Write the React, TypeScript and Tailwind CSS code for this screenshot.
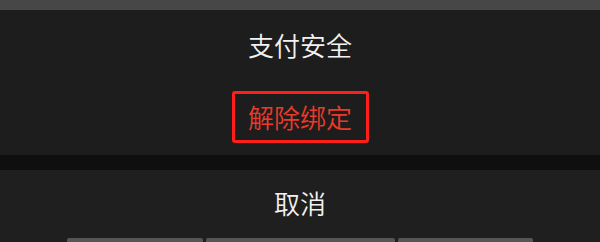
import React from "react";

export default function App() {
  const font = { fontFamily: '"Noto Sans CJK SC", "Noto Sans", sans-serif' };
  return (
    <div className="w-[600px] h-[242px] overflow-hidden flex flex-col bg-[#1d1d1d]" style={font}>
      <div className="h-[10px] shrink-0 bg-[#474747]" />
      <div className="h-[145px] shrink-0 bg-[#1d1d1d] flex flex-col items-center">
        <div className="mt-[22px] text-[26px] leading-[26px] font-[350] text-[#f2f2f2]">支付安全</div>
        <div className="mt-[33px] w-[137px] h-[52px] border-[3px] border-[#ff1f1a] rounded-[3px] flex items-center justify-center">
          <span className="text-[26px] leading-[26px] font-[350] text-[#ec3a2a]">解除绑定</span>
        </div>
      </div>
      <div className="h-[15px] shrink-0 bg-[#0f0f0f]" />
      <div className="flex-1 bg-[#1f1f1f] flex flex-col items-center">
        <div className="mt-[20px] text-[26px] leading-[26px] font-[350] text-[#f2f2f2]">取消</div>
        <div className="mt-[22px] self-start ml-[67px] flex gap-[3px]">
          <div className="w-[136px] h-[6px] rounded-t-[2px] bg-[#555555]" />
          <div className="w-[189px] h-[6px] rounded-t-[2px] bg-[#555555]" />
          <div className="w-[135px] h-[6px] rounded-t-[2px] bg-[#555555]" />
        </div>
      </div>
    </div>
  );
}
